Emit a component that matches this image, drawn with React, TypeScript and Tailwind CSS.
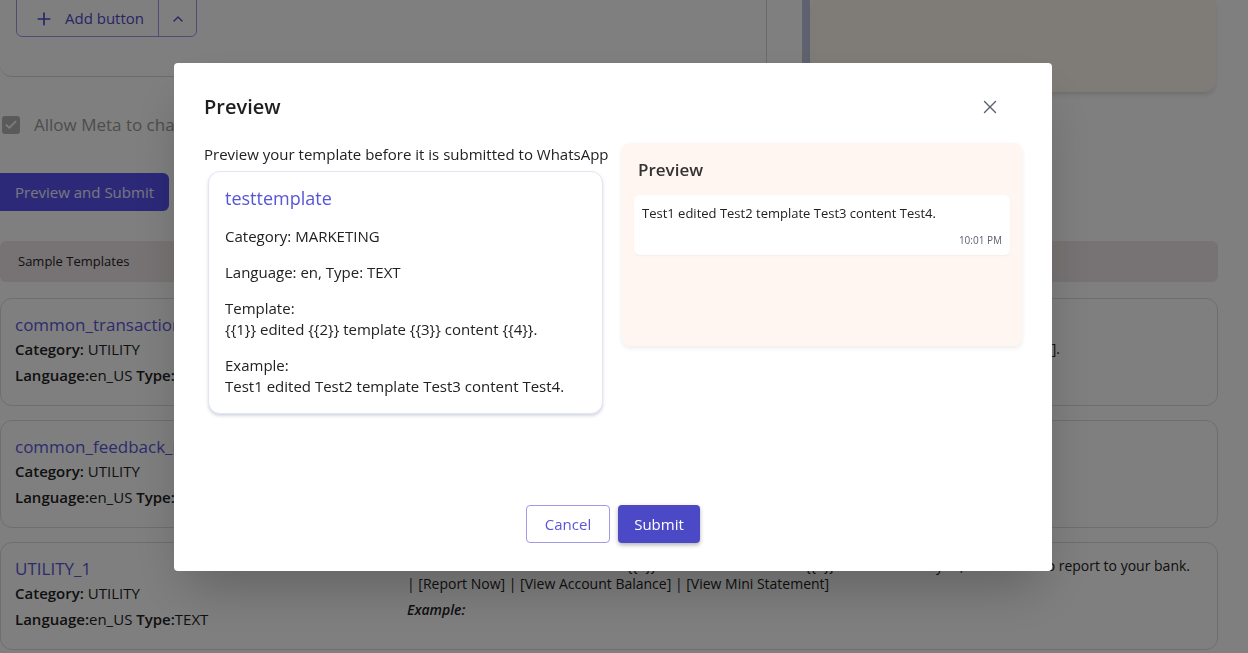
import { LuPlus, LuChevronUp, LuX, LuCheck } from "react-icons/lu";

const font = "font-['Open_Sans',sans-serif]";

const TemplateCard = ({
  name,
  children,
  rightPad,
}: {
  name: string;
  children?: React.ReactNode;
  rightPad: string;
}) => {
  return (
    <div className="flex h-[108px] w-[1218px] flex-row rounded-xl border border-[#dcdcdc] bg-white">
      <div className="flex w-[406px] flex-col px-[14px] pt-[14px]">
        <span className="text-[17px] leading-6 text-[#5b57d9]">{name}</span>
        <span className="text-[15px] leading-6 text-[#222]">
          <span className="font-semibold">Category:</span> UTILITY
        </span>
        <span className="mt-[2px] text-[15px] leading-6 text-[#222]">
          <span className="font-semibold">Language:</span>en_US{" "}
          <span className="font-semibold">Type:</span>TEXT
        </span>
      </div>
      <div className={`flex flex-1 flex-col text-[14px] leading-[18px] text-[#222] ${rightPad}`}>
        {children}
      </div>
    </div>
  );
};

const App = () => {
  return (
    <div className={`relative h-[653px] w-full overflow-hidden bg-white ${font}`}>
      {/* page behind the dialog */}
      <div className="flex flex-col">
        <div className="flex h-[92px] flex-row items-start">
          <div className="h-[77px] w-[767px] rounded-b-xl border-r border-b border-[#d6d6d6] pl-4">
            <div className="mt-[-4px] flex h-[41px] w-[181px] flex-row rounded-b-md border border-[#9f9be6] text-[#4f4bc8]">
              <div className="flex w-[142px] flex-row items-center gap-[11px] border-r border-[#9f9be6] pl-[17px] pt-1">
                <LuPlus size={20} />
                <span className="text-[15px]">Add button</span>
              </div>
              <div className="flex flex-1 items-center justify-center pt-1">
                <LuChevronUp size={16} />
              </div>
            </div>
          </div>
          <div className="ml-[35px] h-[70px] w-[8px] bg-[#bfc4dc]" />
          <div className="ml-[2px] h-[92px] w-[404px] rounded-b-xl bg-[#fef6ef] shadow-md" />
        </div>

        <div className="mt-[22px] flex flex-row items-center gap-[14px] pl-[2px]">
          <div className="flex h-[18px] w-[18px] items-center justify-center rounded-[3px] bg-[#b5b5b5] text-white">
            <LuCheck size={14} strokeWidth={3} />
          </div>
          <span className="whitespace-nowrap text-[17px] leading-[22px] text-[#9a9a9a]">
            Allow Meta to change the template category
          </span>
        </div>

        <button
          className="mt-[37px] h-[38px] w-[169px] rounded-r-md bg-[#5852f2] text-[15px] text-white/90"
          type="button"
        >
          Preview and Submit
        </button>

        <div className="mt-[30px] flex h-[41px] w-[1218px] items-center rounded-md bg-[#efe7e8] pl-[18px] text-[13px] text-[#222]">
          Sample Templates
        </div>

        <div className="mt-[16px] flex flex-col gap-[14px]">
          <TemplateCard name="common_transaction_alert" rightPad="pt-[23px]">
            <div className="w-[640px] whitespace-nowrap">
              Your account was debited with {"{{1}}"} on {"{{2}}"}.
            </div>
            <div className="flex w-[653px] justify-end whitespace-nowrap">
              Reply with [View Account Balance] | [View Mini Statement].
            </div>
          </TemplateCard>
          <TemplateCard name="common_feedback_request" rightPad="pt-[14px]">
            <span className="w-[600px]">
              Hi {"{{1}}"}, thank you for choosing us. How was your experience?
            </span>
          </TemplateCard>
          <TemplateCard name="UTILITY_1" rightPad="pt-[14px]">
            <div className="flex w-[783px] justify-end whitespace-nowrap">
              A transaction of {"{{1}}"} was made on account {"{{2}}"}. If this was not you, click below to report to your bank.
            </div>
            <div className="whitespace-nowrap">
              | [Report Now] | [View Account Balance] | [View Mini Statement]
            </div>
            <div className="mt-2 font-semibold italic">Example:</div>
          </TemplateCard>
        </div>
      </div>

      {/* dialog */}
      <div className="fixed inset-0 bg-black/50">
        <div className="absolute left-[174px] top-[63px] flex h-[508px] w-[878px] flex-col rounded-[4px] bg-white px-[30px] shadow-2xl">
          <div className="flex flex-row items-center justify-between pt-[28px]">
            <h2 className="text-[20px] font-semibold leading-8 text-[#1f1f1f]">Preview</h2>
            <button className="mr-[16px] flex h-8 w-8 items-center justify-center text-[#5a5f70]" type="button">
              <LuX size={22} strokeWidth={1.5} />
            </button>
          </div>

          <div className="mt-[20px] grid grid-cols-[403px_1fr] gap-[15px]">
            <div className="flex flex-col">
              <p className="whitespace-nowrap text-[15px] leading-[22px] text-[#222]">
                Preview your template before it is submitted to WhatsApp
              </p>
              <div className="mx-[4px] mt-[6px] flex flex-col gap-[15px] rounded-xl border border-[#e3e5f2] bg-white px-4 pt-[14px] pb-[16px] text-[15px] leading-[21px] text-[#222] shadow-[0_2px_3px_rgba(90,100,150,0.25)]">
                <span className="text-[18px] leading-[25px] text-[#5854d6]">testtemplate</span>
                <span>Category: MARKETING</span>
                <span>Language: en, Type: TEXT</span>
                <div className="flex flex-col">
                  <span>Template:</span>
                  <span className="whitespace-nowrap">{"{{1}} edited {{2}} template {{3}} content {{4}}."}</span>
                </div>
                <div className="flex flex-col">
                  <span>Example:</span>
                  <span className="whitespace-nowrap">Test1 edited Test2 template Test3 content Test4.</span>
                </div>
              </div>
            </div>

            <div className="flex h-[203px] flex-col rounded-lg bg-[#fff6f1] pt-[15px] shadow-[0_2px_5px_rgba(0,0,0,0.08)]">
              <span className="px-4 text-[17px] font-semibold leading-6 text-[#333]">Preview</span>
              <div className="mx-3 mt-[13px] flex h-[60px] flex-col rounded-md bg-white px-2 pt-[9px] shadow-[0_1px_2px_rgba(0,0,0,0.04)]">
                <span className="text-[13px] leading-[18px] text-[#222]">
                  Test1 edited Test2 template Test3 content Test4.
                </span>
                <span className="mt-[11px] text-right text-[10px] leading-[14px] text-[#5a5f70]">10:01 PM</span>
              </div>
            </div>
          </div>

          <div className="mt-auto mb-[28px] flex flex-row justify-center gap-2">
            <button
              className="h-[38px] w-[84px] rounded-[4px] border border-[#9f9be6] text-[15px] text-[#5a55d9]"
              type="button"
            >
              Cancel
            </button>
            <button
              className="h-[38px] w-[82px] rounded-[4px] bg-[#4c49c7] text-[15px] text-white shadow-[0_2px_4px_rgba(0,0,0,0.3)]"
              type="button"
            >
              Submit
            </button>
          </div>
        </div>
      </div>
    </div>
  );
};

export default App;
